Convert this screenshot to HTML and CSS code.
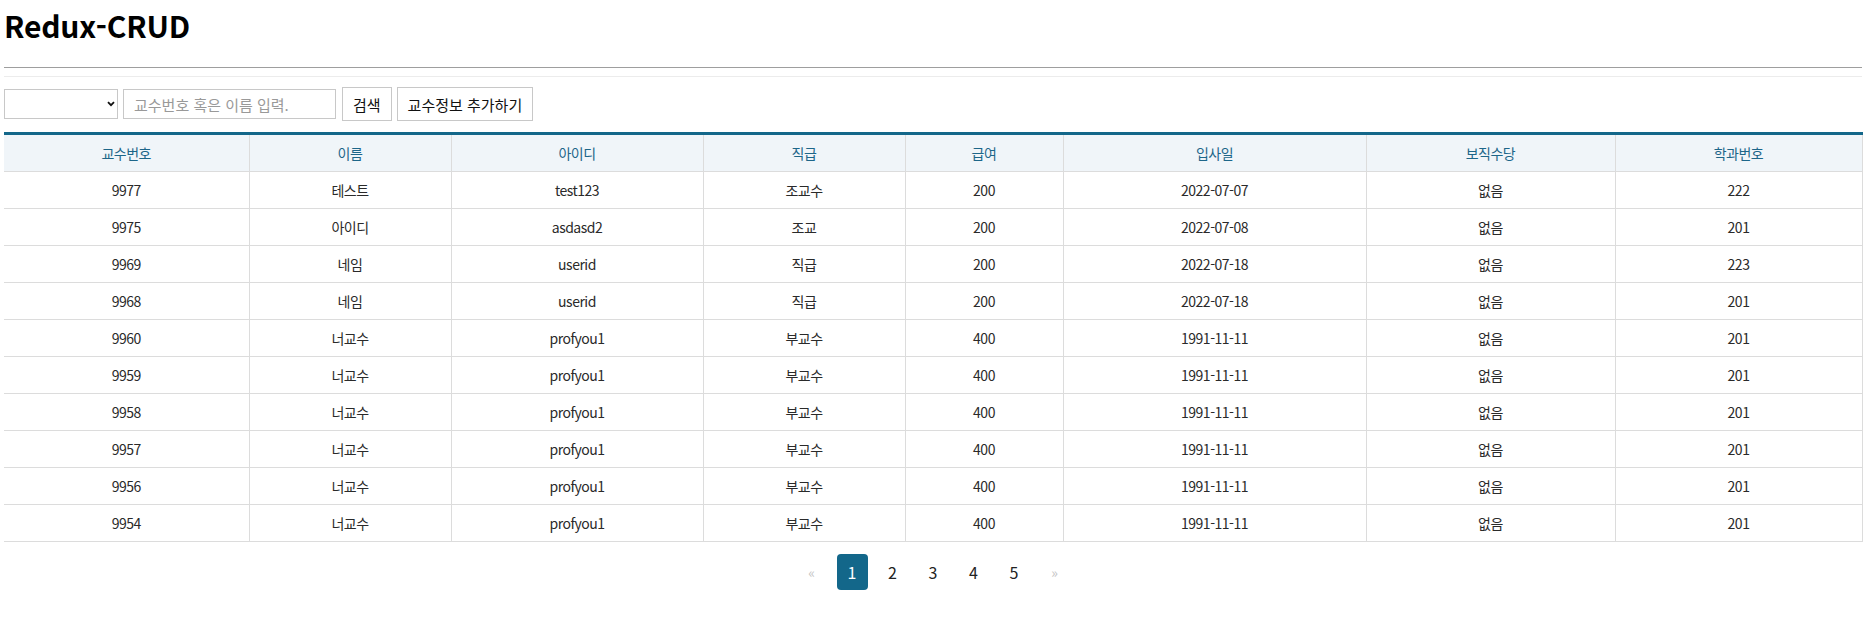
FILE: index.html
```html
<!DOCTYPE html>
<html lang="ko">
<head>
<meta charset="utf-8">
<title>Redux-CRUD</title>
<link rel="stylesheet" href="styles.css">
</head>
<body>
<div class="page">
  <h1 class="title">Redux-CRUD</h1>
  <div class="divider"></div>
  <div class="toolbar">
    <div class="select-wrap">
      <select class="field-select"><option></option></select>
      <svg class="chev" width="8" height="6" viewBox="0 0 8 6"><path d="M1 1.2 L4 4.2 L7 1.2" fill="none" stroke="#111" stroke-width="1.8"/></svg>
    </div>
    <input class="search-input" type="text" placeholder="교수번호 혹은 이름 입력.">
    <button class="btn">검색</button>
    <button class="btn">교수정보 추가하기</button>
  </div>
  <table class="prof-table">
    <colgroup>
      <col class="c1"><col class="c2"><col class="c3"><col class="c4"><col class="c5"><col class="c6"><col class="c7"><col class="c8">
    </colgroup>
    <thead>
      <tr><th>교수번호</th><th>이름</th><th>아이디</th><th>직급</th><th>급여</th><th>입사일</th><th>보직수당</th><th>학과번호</th></tr>
    </thead>
    <tbody>
      <tr><td>9977</td><td>테스트</td><td>test123</td><td>조교수</td><td>200</td><td>2022-07-07</td><td>없음</td><td>222</td></tr>
      <tr><td>9975</td><td>아이디</td><td>asdasd2</td><td>조교</td><td>200</td><td>2022-07-08</td><td>없음</td><td>201</td></tr>
      <tr><td>9969</td><td>네임</td><td>userid</td><td>직급</td><td>200</td><td>2022-07-18</td><td>없음</td><td>223</td></tr>
      <tr><td>9968</td><td>네임</td><td>userid</td><td>직급</td><td>200</td><td>2022-07-18</td><td>없음</td><td>201</td></tr>
      <tr><td>9960</td><td>너교수</td><td>profyou1</td><td>부교수</td><td>400</td><td>1991-11-11</td><td>없음</td><td>201</td></tr>
      <tr><td>9959</td><td>너교수</td><td>profyou1</td><td>부교수</td><td>400</td><td>1991-11-11</td><td>없음</td><td>201</td></tr>
      <tr><td>9958</td><td>너교수</td><td>profyou1</td><td>부교수</td><td>400</td><td>1991-11-11</td><td>없음</td><td>201</td></tr>
      <tr><td>9957</td><td>너교수</td><td>profyou1</td><td>부교수</td><td>400</td><td>1991-11-11</td><td>없음</td><td>201</td></tr>
      <tr><td>9956</td><td>너교수</td><td>profyou1</td><td>부교수</td><td>400</td><td>1991-11-11</td><td>없음</td><td>201</td></tr>
      <tr><td>9954</td><td>너교수</td><td>profyou1</td><td>부교수</td><td>400</td><td>1991-11-11</td><td>없음</td><td>201</td></tr>
    </tbody>
  </table>
  <nav class="pager">
    <span class="pg pg-muted">«</span>
    <span class="pg pg-active">1</span>
    <span class="pg">2</span>
    <span class="pg">3</span>
    <span class="pg">4</span>
    <span class="pg">5</span>
    <span class="pg pg-muted">»</span>
  </nav>
</div>
</body>
</html>
```

FILE: styles.css
```css
* { box-sizing: border-box; }
html, body { margin: 0; padding: 0; background: #fff; }
body {
  font-family: "Noto Sans CJK KR", "Noto Sans", sans-serif;
  color: #222;
}
.page { padding: 0 6px 0 4px; }

.title {
  margin: 0;
  padding-top: 5px;
  font-size: 30px;
  line-height: 40px;
  font-weight: 700;
  color: #000;
  letter-spacing: -0.2px;
}

.divider {
  margin-top: 22px;
  height: 10px;
  border-top: 1px solid #9e9e9e;
  border-bottom: 1px solid #ececec;
}

.toolbar {
  margin-top: 10px;
  display: flex;
  align-items: center;
  gap: 5px;
}
.select-wrap { position: relative; width: 114px; height: 30px; }
.field-select {
  appearance: none;
  -webkit-appearance: none;
  width: 114px;
  height: 30px;
  border: 1px solid #c8c8c8;
  border-radius: 0;
  background: #fff;
  margin: 0;
}
.chev { position: absolute; right: 3px; top: 12px; pointer-events: none; }
.search-input {
  width: 213px;
  height: 30px;
  margin: 0 1px 0 0;
  border: 1px solid #c8c8c8;
  border-radius: 0;
  padding: 0 10px;
  font-family: inherit;
  font-size: 15px;
  color: #222;
}
.search-input::placeholder { color: #999; }
.btn {
  height: 34px;
  margin: 0;
  padding: 0 10px;
  border: 1px solid #c8c8c8;
  border-radius: 0;
  background: #fff;
  font-family: inherit;
  font-size: 15px;
  color: #111;
}

.prof-table {
  margin-top: 11px;
  width: 1858px;
  table-layout: fixed;
  border-collapse: collapse;
  border-top: 3px solid #13678a;
  font-size: 14px;
  letter-spacing: -0.5px;
}
.c1 { width: 245px; } .c2 { width: 202px; } .c3 { width: 252px; } .c4 { width: 202px; }
.c5 { width: 158px; } .c6 { width: 303px; } .c7 { width: 249px; } .c8 { width: 247px; }
.prof-table th {
  height: 38px;
  padding: 0;
  background: #f0f5f9;
  color: #1d6689;
  font-weight: 400;
  text-align: center;
  border-bottom: 1px solid #dcdcdc;
  border-right: 1px solid #dcdcdc;
}
.prof-table td {
  height: 37px;
  padding: 0;
  text-align: center;
  color: #2a2a2a;
  border-bottom: 1px solid #dcdcdc;
  border-right: 1px solid #dcdcdc;
}

.pager {
  margin-top: 12px;
  display: flex;
  justify-content: center;
  gap: 9.5px;
}
.pg {
  width: 31px;
  height: 36px;
  display: flex;
  align-items: center;
  justify-content: center;
  font-size: 16px;
  color: #222;
  border-radius: 4px;
}
.pg-muted { color: #c4c4c4; font-size: 14px; }
.pg-active { background: #13678a; color: #fff; }
```
